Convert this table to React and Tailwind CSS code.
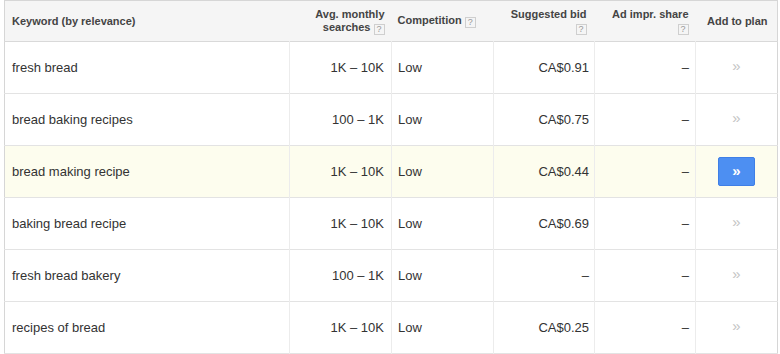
import React from 'react';

const rows = [
  { keyword: 'fresh bread', searches: '1K – 10K', competition: 'Low', bid: 'CA$0.91', share: '–' },
  { keyword: 'bread baking recipes', searches: '100 – 1K', competition: 'Low', bid: 'CA$0.75', share: '–' },
  { keyword: 'bread making recipe', searches: '1K – 10K', competition: 'Low', bid: 'CA$0.44', share: '–', active: true },
  { keyword: 'baking bread recipe', searches: '1K – 10K', competition: 'Low', bid: 'CA$0.69', share: '–' },
  { keyword: 'fresh bread bakery', searches: '100 – 1K', competition: 'Low', bid: '–', share: '–' },
  { keyword: 'recipes of bread', searches: '1K – 10K', competition: 'Low', bid: 'CA$0.25', share: '–' },
];

function Help() {
  return (
    <span className="inline-flex items-center justify-center w-[11px] h-[11px] border border-[#cfcfcf] text-[9px] leading-none font-normal text-[#999] align-[-1px] ml-[3px]">
      ?
    </span>
  );
}

export default function App() {
  return (
    <div className="bg-white w-[780px] h-[354px] font-['Liberation_Sans',Arial,sans-serif] text-[#333]">
      <table className="ml-[4px] table-fixed border-collapse w-[773px] border border-[#d6d6d6]">
        <colgroup>
          <col className="w-[285px]" />
          <col className="w-[102px]" />
          <col className="w-[102px]" />
          <col className="w-[101px]" />
          <col className="w-[101px]" />
          <col className="w-[82px]" />
        </colgroup>
        <thead>
          <tr className="h-[41px] bg-[#f5f5f5] border-b border-[#d9d9d9] text-[11px] leading-[13px] font-bold text-[#444]">
            <th className="text-left pl-[7px]">Keyword (by relevance)</th>
            <th className="text-right pr-[7px] pt-[1px]">
              Avg. monthly<br />searches<Help />
            </th>
            <th className="text-left pl-[6px]">
              Competition<Help />
            </th>
            <th className="text-right pr-[8px] pt-[1px]">
              Suggested bid<br /><Help />
            </th>
            <th className="text-right pr-[7px] pt-[1px]">
              Ad impr. share<br /><Help />
            </th>
            <th className="text-center pl-[2px]">Add to plan</th>
          </tr>
        </thead>
        <tbody className="text-[13px]">
          {rows.map((r) => (
            <tr
              key={r.keyword}
              className={`h-[52px] border-b border-[#e3e3e3] ${r.active ? 'bg-[#fdfdee]' : 'bg-white'}`}
            >
              <td className="pl-[7px] border-r border-[#ececec]">{r.keyword}</td>
              <td className="text-right pr-[7px] border-r border-[#ececec]">{r.searches}</td>
              <td className="pl-[6px] border-r border-[#ececec]">{r.competition}</td>
              <td className="text-right pr-[5px] border-r border-[#ececec]">{r.bid}</td>
              <td className="text-right pr-[6px] border-r border-[#ececec]">{r.share}</td>
              <td className="text-center">
                {r.active ? (
                  <button className="inline-flex items-center justify-center w-[37px] h-[29px] rounded-[2px] bg-[#4d8ff2] border border-[#3f7fe6] text-white text-[15px] font-bold leading-none pb-[2px]">
                    »
                  </button>
                ) : (
                  <span className="inline-block text-[15px] text-[#c4c4c4] pb-[2px]">»</span>
                )}
              </td>
            </tr>
          ))}
        </tbody>
      </table>
    </div>
  );
}
